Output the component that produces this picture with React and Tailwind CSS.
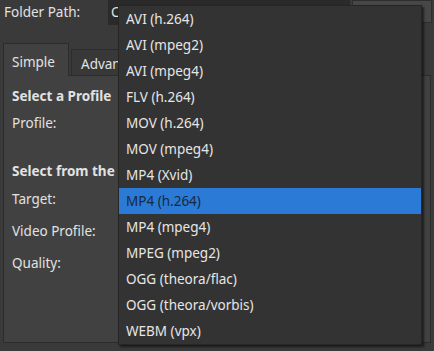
import React from "react";

const items = [
  "AVI (h.264)",
  "AVI (mpeg2)",
  "AVI (mpeg4)",
  "FLV (h.264)",
  "MOV (h.264)",
  "MOV (mpeg4)",
  "MP4 (Xvid)",
  "MP4 (h.264)",
  "MP4 (mpeg4)",
  "MPEG (mpeg2)",
  "OGG (theora/flac)",
  "OGG (theora/vorbis)",
  "WEBM (vpx)",
];

export default function App() {
  return (
    <div
      className="relative w-[434px] h-[351px] overflow-hidden bg-[#3a3a3a] text-[13.5px] text-[#e2e2e2]"
      style={{ fontFamily: '"Noto Sans", "Open Sans", sans-serif' }}
    >
      {/* Folder path row */}
      <div className="flex h-[25px] items-start">
        <div className="w-[108px] h-[25px] flex items-center pl-[4px] pb-[1px]">Folder Path:</div>
        <div className="w-[242px] h-[25px] bg-[#2a2a2a] flex items-center pl-[3px] pb-[1px]">C</div>
        <div className="ml-[2px] w-[80px] h-[23px] bg-[#474747] border border-[#2e2e2e]"></div>
      </div>

      {/* Tabs */}
      <div className="flex items-end mt-[18px] pl-[3px] h-[32px]">
        <div className="w-[66px] h-[33px] -mb-px bg-[#414141] border border-[#2c2c2c] border-b-0 flex items-center pl-[8px] pt-[5px] relative z-10">
          Simple
        </div>
        <div className="ml-[2px] w-[120px] h-[26px] bg-[#383838] border border-[#2c2c2c] border-b-0 flex items-center pl-[9px] pt-[3px]">
          Advanced
        </div>
      </div>

      {/* Pane */}
      <div className="ml-[3px] w-[428px] h-[268px] bg-[#414141] border border-[#2c2c2c] pl-[8px] pt-[10px] flex flex-col">
        <div className="h-[20px] flex items-center font-bold">Select a Profile</div>
        <div className="mt-[4px] h-[26px] flex items-center">Profile:</div>
        <div className="mt-[25px] h-[20px] flex items-center font-bold">Select from the list</div>
        <div className="mt-[5px] h-[26px] flex items-center">Target:</div>
        <div className="mt-[6px] h-[26px] flex items-center">Video Profile:</div>
        <div className="mt-[6px] h-[26px] flex items-center">Quality:</div>
      </div>

      {/* Dropdown menu */}
      <div className="absolute left-[118px] top-[5px] w-[304px] bg-[#333333] border border-[#262626] shadow-[2px_2px_2px_rgba(0,0,0,0.55)] flex flex-col">
        {items.map((it) => {
          const sel = it === "MP4 (h.264)";
          return (
            <div
              key={it}
              className={
                sel
                  ? "h-[26px] flex items-center pl-[7px] bg-[#2b7bd6] text-[#17283f]"
                  : "h-[26px] flex items-center pl-[7px] text-[#e6e6e6]"
              }
            >
              {it}
            </div>
          );
        })}
      </div>
    </div>
  );
}
